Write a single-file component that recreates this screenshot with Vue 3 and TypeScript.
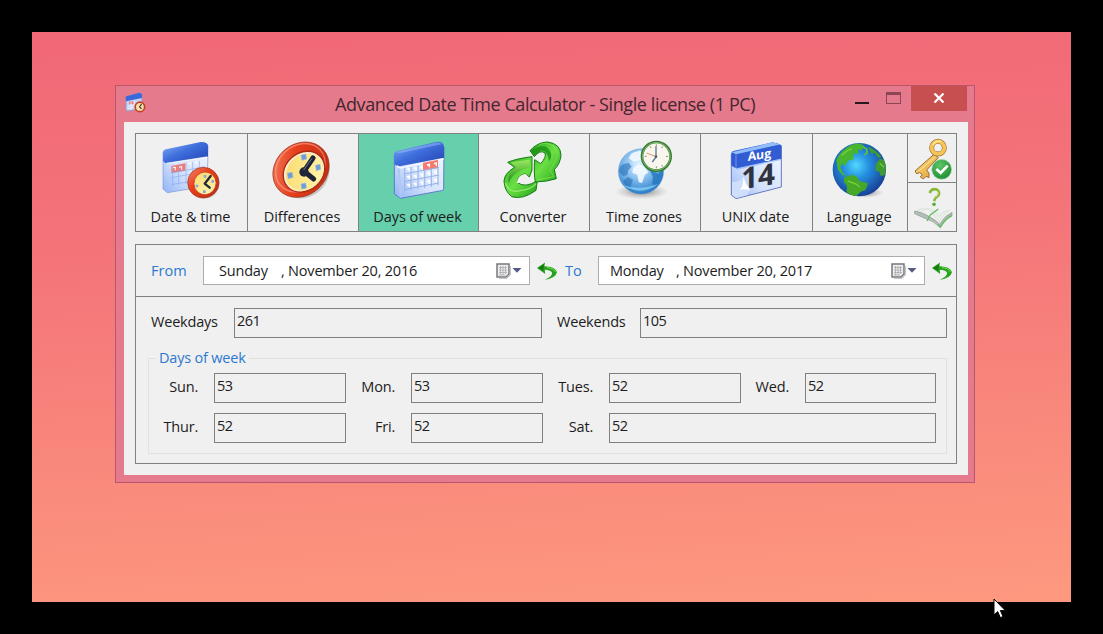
<script setup lang="ts">
interface Field { label: string; value: string; cls?: string }

const tools: string[] = ['Date & time', 'Differences', 'Days of week', 'Converter', 'Time zones', 'UNIX date', 'Language']
const views: string[] = [
  '144 171 198 198', '480 171 198 198', '105 171 198 198', '453 171 198 198',
  '66 171 198 198', '399 171 198 198', '141 171 198 198',
]
const active = 2
const dates = [
  { label: 'From', day: 'Sunday', date: ', November 20, 2016', cls: 'from' },
  { label: 'To', day: 'Monday', date: ', November 20, 2017', cls: 'to' },
]
const days: Field[] = [
  { label: 'Sun.', value: '53' }, { label: 'Mon.', value: '53' },
  { label: 'Tues.', value: '52' }, { label: 'Wed.', value: '52' },
  { label: 'Thur.', value: '52' }, { label: 'Fri.', value: '52' },
  { label: 'Sat.', value: '52', cls: 'wide' },
]
</script>

<template>
  <div class="screen">
    <div class="desktop">
      <div class="window">
        <header class="titlebar">
          <svg class="appicon" viewBox="46 37 62 62">
            <path d="M49 52 L90 40 L96 44 L96 85 L55 93 L49 91Z" fill="#c3d3f6" stroke="#8797cf" stroke-width="2" />
            <path d="M48 50 L88 39 L96 43 L96 55 L49 64Z" fill="#3a68d8" />
            <path d="M58 65h13v8h-13z" fill="#ea7c7c" />
            <path d="M54 79 L80 74 M54 86 L80 81 M64 65V89 M74 62V86" stroke="#fff" stroke-width="2" />
            <circle cx="90" cy="81" r="14" fill="#f4dfa8" stroke="#c73d20" stroke-width="5" />
            <path d="M95 72 L89 81 L95 87" fill="none" stroke="#333" stroke-width="3" />
          </svg>
          <h1 class="title">Advanced Date Time Calculator - Single license (1 PC)</h1>
          <div class="controls">
            <span class="min"></span>
            <span class="max"></span>
            <span class="close">
              <svg viewBox="0 0 12 10"><path d="M1.5 .5 L10.5 9.5 M10.5 .5 L1.5 9.5" stroke="#fff" stroke-width="2.2" /></svg>
            </span>
          </div>
        </header>

        <main class="client">
          <svg class="defs" width="0" height="0">
            <defs>
              <linearGradient id="blueTop" x1="0" y1="0" x2="1" y2="1"><stop offset="0" stop-color="#86b3f7" /><stop offset=".45" stop-color="#3f6fdd" /><stop offset="1" stop-color="#1f3fae" /></linearGradient>
              <linearGradient id="page" x1="0" y1="1" x2="1" y2="0"><stop offset="0" stop-color="#8fb4f5" /><stop offset=".4" stop-color="#d3e1fc" /><stop offset="1" stop-color="#f4f8ff" /></linearGradient>
              <linearGradient id="red" x1="0" y1="0" x2="1" y2="1"><stop offset="0" stop-color="#f58a70" /><stop offset=".4" stop-color="#e8401c" /><stop offset="1" stop-color="#b92a10" /></linearGradient>
              <linearGradient id="face" x1="0" y1="0" x2="1" y2="1"><stop offset="0" stop-color="#fbd968" /><stop offset="1" stop-color="#fff6b4" /></linearGradient>
              <linearGradient id="green" x1="0" y1="0" x2="1" y2="1"><stop offset="0" stop-color="#2aa81c" /><stop offset=".5" stop-color="#6be045" /><stop offset="1" stop-color="#23a318" /></linearGradient>
              <linearGradient id="darkgreen" x1="0" y1="0" x2="0" y2="1"><stop offset="0" stop-color="#9cea60" /><stop offset="1" stop-color="#178a15" /></linearGradient>
              <radialGradient id="zone" cx=".45" cy=".35" r=".65"><stop offset="0" stop-color="#e5f3ff" /><stop offset=".45" stop-color="#8fc4f2" /><stop offset="1" stop-color="#2a7cc8" /></radialGradient>
              <radialGradient id="earth" cx=".44" cy=".42" r=".6"><stop offset="0" stop-color="#52d8ff" /><stop offset=".4" stop-color="#2590e0" /><stop offset="1" stop-color="#163f94" /></radialGradient>
              <radialGradient id="shade"><stop offset="0" stop-color="#555" stop-opacity=".75" /><stop offset="1" stop-color="#999" stop-opacity="0" /></radialGradient>
              <linearGradient id="gold" x1="0" y1="0" x2="1" y2="1"><stop offset="0" stop-color="#fbe38a" /><stop offset="1" stop-color="#e09a2c" /></linearGradient>
              <radialGradient id="ok" cx=".4" cy=".3" r=".8"><stop offset="0" stop-color="#5fc468" /><stop offset="1" stop-color="#178a2c" /></radialGradient>
            </defs>
          </svg>

          <nav class="toolbar">
            <div v-for="(tool, i) in tools" :key="tool" class="tool" :class="{ active: i === active }">
              <svg class="icon" :viewBox="views[i]">
                <template v-if="i === 0">
                  <path d="M159 216 L280 187 L294 196 L292 318 L172 338 L159 327Z" fill="url(#page)" stroke="#7f95dc" stroke-width="2" />
                  <path d="M159 218 Q159 210 168 208 L272 186 Q294 186 294 198 V230 L166 250 L159 242Z" fill="url(#blueTop)" />
                  <path d="M170 250 L292 231" stroke="#fff" stroke-width="4" opacity=".7" />
                  <path d="M184 258 L226 250 V272 L184 279Z" fill="#f27a74" />
                  <path d="M184 293 L284 275 M184 314 L284 297 M184 279 L284 260 M188 258V318 M206 254V314 M228 248V312 M248 246V300 M268 243V290" stroke="#83aaf0" stroke-width="2.5" opacity=".75" />
                  <path d="M188 264l8-3v10 M207 262l8-3v10 M234 250l7-2v8 M253 247l7-2v8" fill="none" stroke="#fff" stroke-width="3" />
                  <ellipse cx="282" cy="310" rx="47" ry="46" fill="#555" opacity=".2" />
                  <ellipse cx="280" cy="308" rx="47" ry="46" fill="url(#red)" stroke="#a33320" stroke-width="2" />
                  <ellipse cx="285" cy="310" rx="33" ry="34" fill="url(#face)" stroke="#c43b20" stroke-width="2" transform="rotate(20 285 310)" />
                  <path d="M281 285h8v8h-8z M257 314h8v8h-8z M304 300h8v8h-8z M279 331h8v8h-8z" fill="#86a8d8" />
                  <path d="M302 288 L284 311 L299 323" fill="none" stroke="#252a38" stroke-width="7" stroke-linejoin="round" stroke-linecap="round" />
                </template>
                <template v-else-if="i === 1">
                  <ellipse cx="579" cy="273" rx="85" ry="80" fill="#444" opacity=".25" transform="rotate(-42 579 273)" />
                  <ellipse cx="576" cy="269" rx="90" ry="77" fill="url(#red)" stroke="#9c2b18" stroke-width="2" transform="rotate(-42 576 269)" />
                  <ellipse cx="574" cy="263" rx="80" ry="66" fill="none" stroke="#ffb3a0" stroke-width="4" opacity=".55" transform="rotate(-42 574 263)" />
                  <ellipse cx="585" cy="275" rx="67" ry="56" fill="#ffefd4" stroke="#a92b15" stroke-width="4" transform="rotate(-42 585 275)" />
                  <ellipse cx="587" cy="276" rx="61" ry="51" fill="url(#face)" transform="rotate(-42 587 276)" />
                  <path d="M576 226l14-4 3 15-14 4z M620 256l13-3 2 15-13 4z M535 280l14-3 3 15-14 4z M576 312l14-3 2 15-14 3z" fill="#6f9bd7" stroke="#96b8e3" stroke-width="2" />
                  <path d="M612 234 L585 274 L614 297" fill="none" stroke="#1c2233" stroke-width="15" stroke-linejoin="round" stroke-linecap="round" />
                  <circle cx="585" cy="276" r="14" fill="#20263a" />
                  <path d="M609 235 L584 270" stroke="#747b91" stroke-width="3" />
                </template>
                <template v-else-if="i === 2">
                  <path d="M133 226 L270 192 L282 201 L281 325 Q282 331 274 332 L152 355 L133 342Z" fill="url(#page)" stroke="#5d7bd0" stroke-width="3" />
                  <path d="M132 226 Q131 216 142 213 L258 186 Q281 183 282 201 V233 L149 259 Q132 260 132 244Z" fill="url(#blueTop)" />
                  <path d="M137 216 L263 187 L278 192 L148 220Z" fill="#9fc5fa" opacity=".45" />
                  <path d="M140 257 L150 264 L281 237" fill="none" stroke="#fff" stroke-width="5" opacity=".75" />
                  <path d="M146 265 L152 352" stroke="#b0c7f5" stroke-width="6" />
                  <path d="M219 248 L264 239 V264 L219 272Z" fill="#f77b70" />
                  <path d="M164 263V334 M183 260V331 M204 256V327 M224 272V324 M244 267V321 M264 262V316 M162 282L267 262 M162 305L267 285 M162 329L267 309" stroke="#94b1e9" stroke-width="3" />
                  <path d="M171 268l7-2v9 M191 265l7-2v9 M210 262l7-2v9 M231 255l7-2v9 M252 251l7-2v9 M171 291l7-2v9 M191 288l7-2v9 M210 284l7-2v9 M231 280l7-2v9 M252 276l7-2v9 M171 315l7-2v9 M191 312l7-2v9 M210 308l7-2v9 M231 304l7-2v9 M252 300l7-2v9" fill="none" stroke="#fff" stroke-width="4" />
                </template>
                <template v-else-if="i === 3">
                  <path d="M497 262 L476 247 Q501 236 549 230 V270 L541 291 L528 281 Q502 290 505 307 Q527 326 565 302 L561 331 Q522 360 488 350 Q466 332 465 303 Q466 280 497 262Z" fill="url(#green)" stroke="#157c13" stroke-width="3" stroke-linejoin="round" />
                  <path d="M484 247 L541 239 L543 263 L520 268 Q480 290 480 310 Q470 284 502 262Z" fill="url(#darkgreen)" />
                  <path d="M503 308 Q506 286 529 281 L541 293 Q522 308 505 309Z" fill="#f0f0f0" />
                  <path d="M469 309 Q481 342 517 331 Q545 329 561 311" fill="none" stroke="#a0ef7e" stroke-width="4" opacity=".8" />
                  <path d="M543 212 Q566 186 596 186 Q635 191 636 226 Q634 251 616 269 L622 296 Q596 305 559 306 Q554 280 557 239 L575 251 Q593 231 588 219 Q573 208 556 230Z" fill="url(#green)" stroke="#157c13" stroke-width="3" stroke-linejoin="round" />
                  <path d="M545 211 Q575 194 592 200 Q617 220 600 245 Q597 214 577 211 L556 229Z" fill="#178c15" opacity=".75" />
                  <path d="M570 194 Q594 184 614 200 Q637 222 614 252 L603 271 L615 290 L564 300" fill="none" stroke="#9def70" stroke-width="3" opacity=".45" />
                </template>
                <template v-else-if="i === 4">
                  <ellipse cx="158" cy="335" rx="80" ry="23" fill="url(#shade)" />
                  <circle cx="156" cy="274" r="68" fill="url(#zone)" stroke="#4b91cc" />
                  <path d="M91 277 Q90 261 102 253 L119 248 L128 260 L118 271 L115 285 L103 288Z M117 291 L132 299 L125 319 L133 334 Q111 323 102 303Z" fill="#276fb5" opacity=".6" />
                  <path d="M128 220 L153 211 L164 223 L160 239 L134 245 L119 235Z M132 264 Q146 250 164 258 L178 277 L167 286 L159 309 L149 306 L145 284 L130 278Z" fill="#f4f9ff" opacity=".9" />
                  <path d="M181 268 L207 281 L222 270 Q223 299 200 319 L189 311 L192 291Z" fill="#2478bf" opacity=".8" />
                  <path d="M102 316 Q155 350 208 312 Q154 332 102 316" fill="#8bd8fb" opacity=".7" />
                  <circle cx="202" cy="229" r="43" fill="#f8f6ed" stroke="#347b2e" stroke-width="8" />
                  <circle cx="202" cy="229" r="42" fill="none" stroke="#8cc27c" stroke-width="2.5" />
                  <path d="M202 193v6 M202 259v6 M167 229h6 M231 229h6 M221 199l-3 5 M183 199l3 5 M221 260l-3-5" stroke="#777" stroke-width="2.5" />
                  <path d="M201 199 V231 L190 246" fill="none" stroke="#62758e" stroke-width="4" />
                  <path d="M172 219 L202 230" stroke="#cf9a75" stroke-width="3" />
                  <circle cx="201" cy="230" r="4" fill="#46637e" />
                </template>
                <template v-else-if="i === 5">
                  <path d="M424 223 L560 190 L574 198 V321 L438 356 L424 345Z" fill="url(#page)" stroke="#6679be" stroke-width="3" />
                  <path d="M424 224 Q422 214 433 212 L548 187 L574 195 V237 L441 266 L424 257Z" fill="#315cd3" />
                  <path d="M425 217 L547 187 L572 193 L438 223Z" fill="#92bdfb" />
                  <path d="M438 224V264" stroke="#6e95ec" stroke-width="3" />
                  <path d="M440 267 L572 238" stroke="#a2c3f8" stroke-width="4" />
                  <g transform="matrix(1 -.16 0 1 0 0)">
                    <text x="473" y="319" class="aug">Aug</text>
                    <text x="454" y="401" class="fourteen">14</text>
                  </g>
                  <path d="M426 306 Q454 303 460 290 Q468 308 480 328 L471 346 L438 355 L426 344Z" fill="#cfdffb" />
                  <path d="M460 290 Q466 313 481 332 Q463 325 450 330 Q462 312 460 290Z" fill="#fff" />
                </template>
                <template v-else>
                  <ellipse cx="258" cy="338" rx="56" ry="16" fill="url(#shade)" />
                  <circle cx="241" cy="269" r="80" fill="url(#earth)" />
                  <path d="M172 240 Q186 208 218 194 L237 190 L253 195 L249 212 L237 208 L238 222 L224 220 L222 239 L209 241 L196 259 L190 250 L184 261 L191 278 L203 287 L190 285 L177 269Z" fill="#49b52f" />
                  <path d="M196 292 L220 284 L236 292 L241 303 L267 310 L260 329 L245 335 L232 348 Q212 347 203 336 L204 319 L194 304Z" fill="#45a927" />
                  <path d="M267 200 Q291 209 308 232 L297 233 L288 219 L277 221Z M290 253 L302 236 L314 239 Q326 260 317 286 L305 288 L301 276 L289 271Z" fill="#3f9a32" />
                  <path d="M188 226l16-13 15-7 M206 303l27 10 9 9 M302 250l13 12" fill="none" stroke="#92df4c" stroke-width="4" opacity=".65" />
                  <path d="M251 200l12 7 1 12-8 6" fill="none" stroke="#5ec33c" stroke-width="5" />
                </template>
              </svg>
              <span class="caption">{{ tool }}</span>
            </div>
            <div class="extras">
              <svg class="small" viewBox="384 162 144 144">
                <path d="M463 222 L405 273 L410 281 L419 278 L427 284 L421 291 L430 297 L438 289 L447 293 L447 280 L440 270 L475 233Z" fill="url(#gold)" stroke="#9c6c34" stroke-width="3" stroke-linejoin="round" />
                <circle cx="474" cy="203" r="19" fill="none" stroke="#9f7034" stroke-width="15" />
                <circle cx="474" cy="203" r="19" fill="none" stroke="#f5c557" stroke-width="11" />
                <path d="M458 195 Q467 180 483 184" fill="none" stroke="#ffeea6" stroke-width="4" />
                <path d="M466 230 L417 273" stroke="#ffe79e" stroke-width="3" />
                <circle cx="485" cy="268" r="30" fill="url(#ok)" stroke="#bfe0c1" stroke-width="2" />
                <path d="M469 267 L482 279 L503 257" fill="none" stroke="#fff" stroke-width="8" />
              </svg>
              <svg class="small" viewBox="384 309 144 144">
                <path d="M404 393 Q429 397 450 411 Q465 418 479 433 Q492 409 516 397 L516 408 Q494 417 481 443 Q459 421 432 414 L404 401Z" fill="#b3beb4" stroke="#8b9a8d" stroke-width="2" />
                <path d="M411 391 Q438 374 458 400 L477 428 Q486 404 509 391 Q486 393 477 409 Q461 385 445 386 L422 394Z" fill="#e7efe6" stroke="#c3cec3" stroke-width="1" />
                <path d="M441 423 L451 405 L475 387 M474 433 L481 441 Q492 421 515 406" fill="none" stroke="#67ba67" stroke-width="4" />
                <path d="M449 339 Q454 325 468 328 Q482 334 475 347 Q465 353 462 363" fill="none" stroke="#88b938" stroke-width="8" />
                <path d="M473 333 Q480 343 466 353" fill="none" stroke="#c6dc68" stroke-width="3" />
                <circle cx="462" cy="373" r="5.5" fill="#5dad43" />
              </svg>
            </div>
          </nav>

          <section class="panel">
            <div class="dates">
              <template v-for="d in dates" :key="d.label">
                <label class="blue" :class="d.cls">{{ d.label }}</label>
                <div class="picker" :class="d.cls">
                  <span class="day">{{ d.day }}</span>
                  <span class="date">{{ d.date }}</span>
                  <svg class="cal" viewBox="0 0 28 18">
                    <path d="M2 2h12v10l-3 3H2z" fill="#ededf0" stroke="#77777c" stroke-width="1.5" />
                    <path d="M15.2 4v9L12 16.2H4" fill="none" stroke="#aaa" />
                    <path d="M4 5.5h8M4 8h8M4 10.5h8M4 13h6M5.5 4v9M8 4v9M10.5 4v8" stroke="#aaaab0" stroke-width=".8" />
                    <path d="M17.5 6h9L22 10.8z" fill="#555b87" />
                  </svg>
                </div>
                <svg class="undo" viewBox="0 0 20 18">
                  <path d="M0 6 L8 .5 L7.4 4.2 Q18 4.5 20 10 Q19 16 7.5 18 Q16 14 15 10.5 Q13 8 7.8 7.8 L8.2 12z" fill="#26a51c" />
                  <path d="M1 6 L7 2 L6.5 9z" fill="#147d12" />
                  <path d="M10 5.5q7 1 8.4 4.5" fill="none" stroke="#76d85d" />
                </svg>
              </template>
            </div>

            <div class="totals">
              <label class="wk">Weekdays</label><output class="box weekdays">261</output>
              <label class="we">Weekends</label><output class="box weekends">105</output>
            </div>

            <div class="group">
              <span class="legend">Days of week</span>
              <div class="grid">
                <template v-for="f in days" :key="f.label">
                  <label>{{ f.label }}</label>
                  <output class="box" :class="f.cls">{{ f.value }}</output>
                </template>
              </div>
            </div>
          </section>
        </main>
      </div>
    </div>
    <svg class="cursor" viewBox="0 0 13 21">
      <path d="M1 1 V17 L4.7 13.6 L7.4 19.7 L10 18.5 L7.4 12.6 H12.3z" fill="#fff" stroke="#000" stroke-width="1" />
    </svg>
  </div>
</template>

<style>
body { margin: 0; overflow: hidden; background: #000; }
</style>

<style scoped>
* { box-sizing: border-box; }
svg { display: block; }
.screen {
  position: relative; width: 1103px; height: 634px; padding: 32px; background: #000;
  font: 14.5px/20px "Open Sans", "Noto Sans", sans-serif; color: #1c1c1c; letter-spacing: -.2px;
}
.desktop {
  width: 1039px; height: 570px; padding: 53px 0 0 83px;
  background: linear-gradient(177deg, #f16877 0%, #f47379 35%, #f98a7c 73%, #fe997f 100%);
}
.window {
  width: 860px; height: 398px; padding: 0 7px 7px 8px; background: #e57a8d;
  border: 1px solid #b9566b; display: flex; flex-direction: column;
}
.titlebar { height: 36px; flex: none; display: flex; align-items: flex-start; }
.appicon { width: 21px; height: 21px; margin: 6px 0 0 1px; flex: none; }
.title {
  margin: 5px 0 0 189px; width: 421px; font-size: 18px; line-height: 26px; font-weight: 400;
  color: #43262f; white-space: nowrap; letter-spacing: -.4px;
}
.controls { display: flex; margin-left: auto; }
.min { width: 14px; height: 2px; background: #27191d; margin: 16px 17px 0 0; }
.max { width: 15px; height: 12px; border: 1px solid #8c4656; border-top-width: 3px; margin: 6px 10px 0 0; }
.close { width: 56px; height: 25px; padding: 0 1px 2px 0; background: #c74f50; display: flex; align-items: center; justify-content: center; }
.close svg { width: 12px; height: 10px; }
.client { height: 353px; width: 844px; background: #f0f0f0; padding: 11px; }
.defs { position: absolute; }
.toolbar {
  width: 822px; height: 99px; border: 1px solid #808281;
  display: grid; grid-template-columns: 112px 111px 120px 111px 111px 112px 95px 48px;
}
.tool { border-right: 1px solid #808281; padding: 3px 2px 0 0; display: flex; flex-direction: column; align-items: center; }
.tool.active { background: #66cfab; }
.icon { width: 66px; height: 66px; flex: none; }
.caption { margin-top: 4px; white-space: nowrap; letter-spacing: -.05px; }
.aug { font: 700 37px "Open Sans", sans-serif; fill: #fff; }
.fourteen { font: 700 89px "Open Sans", sans-serif; fill: #303440; letter-spacing: -1px; }
.extras { display: flex; flex-direction: column; }
.small { width: 48px; height: 48px; }
.small + .small { box-shadow: 0 -1px #808281; margin-top: 1px; }
.panel { width: 822px; height: 220px; margin-top: 12px; border: 1px solid #808080; }
.dates { height: 52px; border-bottom: 1px solid #808080; display: flex; align-items: center; }
.blue, .legend { color: #2c78d0; }
label { white-space: nowrap; }
label.from { width: 67px; padding-left: 15px; letter-spacing: 0; }
label.to { width: 41px; padding-left: 8px; letter-spacing: 0; }
.picker { width: 327px; height: 29px; border: 1px solid #adadad; background: #fff; display: flex; align-items: center; }
.day { width: 62px; margin-left: 15px; white-space: nowrap; }
.picker.to .day { width: 66px; margin-left: 11px; }
.date { white-space: nowrap; }
.cal { width: 28px; height: 18px; margin: 0 6px 0 auto; }
.undo { width: 20px; height: 18px; margin-left: 7px; }
.totals { display: flex; padding-top: 11px; height: 53px; align-items: flex-start; }
.totals label { line-height: 28px; }
.wk { width: 98px; padding-left: 15px; }
.we { width: 98px; padding-left: 15px; }
.box { display: block; height: 30px; border: 1px solid #808080; padding-left: 2px; line-height: 24px; letter-spacing: -.5px; }
.weekdays { width: 308px; }
.weekends { width: 307px; }
.group { margin: 8px 9px 0 12px; height: 96px; border: 1px solid #e1e1e1; padding-top: 14px; }
.legend { position: absolute; margin: -25px 0 0 7px; padding: 0 3px; background: #f0f0f0; letter-spacing: -.2px; }
.grid { display: grid; grid-template-columns: 65px 132px 65px 132px 66px 132px 64px 131px; row-gap: 10px; }
.grid label { text-align: right; padding-right: 16px; line-height: 28px; }
.wide { grid-column: span 3; }
.cursor { position: absolute; left: 993px; top: 598px; width: 13px; height: 21px; }
</style>
